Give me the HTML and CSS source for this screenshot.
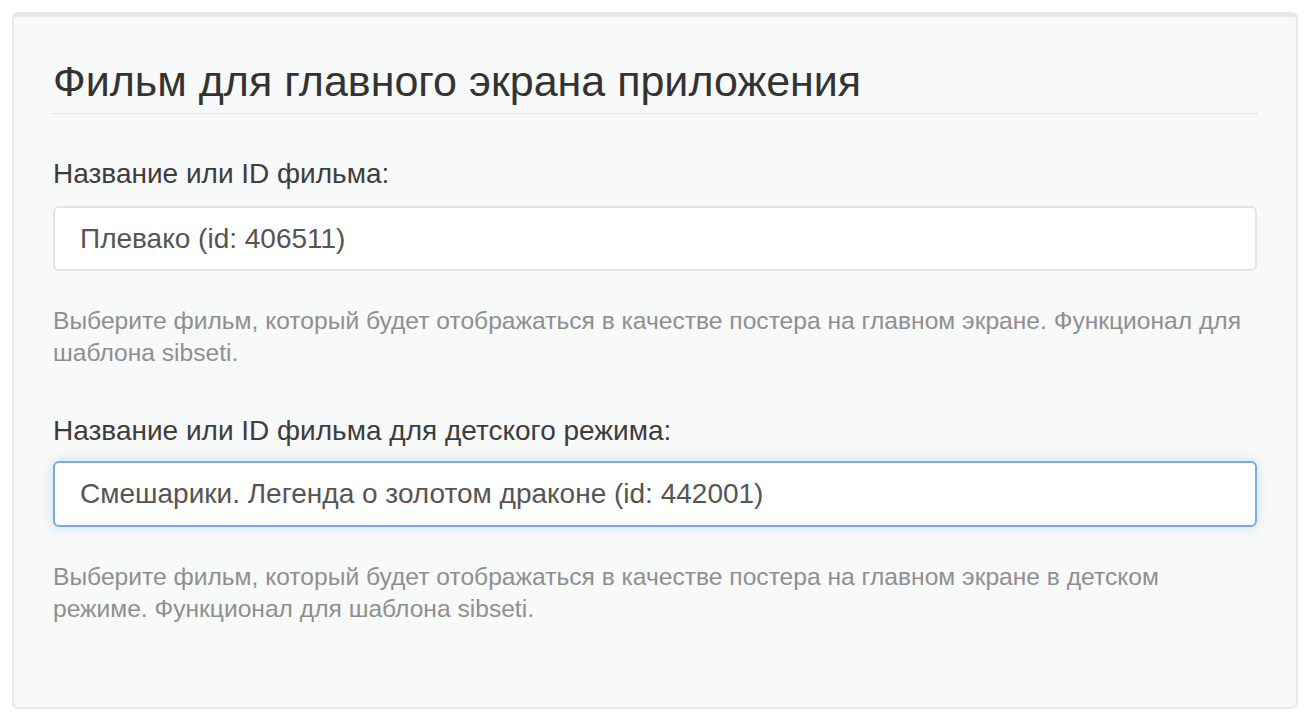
FILE: index.html
```html
<!DOCTYPE html>
<html lang="ru">
<head>
    <meta charset="UTF-8">
    <meta name="viewport" content="width=device-width, initial-scale=1.0">
    <title>Фильм для главного экрана</title>
    <link rel="stylesheet" href="styles.css">
</head>
<body>

<div class="panel">
    <!-- Header -->
    <h3 class="panel-title">Фильм для главного экрана приложения</h3>

    <!-- Main poster -->
    <div class="form-group">
        <label for="main-film">Название или ID фильма:</label>
        <input type="text" id="main-film" class="form-control" value="Плевако (id: 406511)">
        <p class="help-block">Выберите фильм, который будет отображаться в качестве постера на главном экране. Функционал для шаблона sibseti.</p>
    </div>

    <!-- Kids mode poster -->
    <div class="form-group">
        <label for="kids-film">Название или ID фильма для детского режима:</label>
        <input type="text" id="kids-film" class="form-control is-focused" value="Смешарики. Легенда о золотом драконе (id: 442001)">
        <p class="help-block">Выберите фильм, который будет отображаться в качестве постера на главном экране в детском режиме. Функционал для шаблона sibseti.</p>
    </div>
</div>

</body>
</html>
```

FILE: styles.css
```css
/* Global Reset */
*, *::before, *::after {
    margin: 0;
    padding: 0;
    box-sizing: border-box;
}

:root {
    --text-color: #333333;
    --muted-color: #8f8f8f;
    --border-color: #e6e8ea;
    --focus-color: #79abe6;
}

body {
    font-family: 'Liberation Sans', Arial, sans-serif;
    background-color: #ffffff;
    color: var(--text-color);
    padding: 12px;
}

/* Panel */
.panel {
    background-color: #f8f9f9;
    border: 2px solid var(--border-color);
    border-top-width: 5px;
    border-radius: 6px;
    padding: 41px 39px 82px;
}

.panel-title {
    font-size: 43px;
    font-weight: 400;
    line-height: 1.1;
    color: #333333;
    padding-bottom: 8px;
    border-bottom: 1px dotted #cdd0d2;
}

/* Form groups */
.form-group label {
    display: block;
    font-size: 28px;
    line-height: 35px;
    color: #3d3d3d;
    margin-top: 42px;
    margin-bottom: 15px;
}

.form-group + .form-group label {
    margin-top: 44px;
    margin-bottom: 13px;
}

.form-control {
    display: block;
    width: 100%;
    height: 65px;
    padding: 0 25px;
    font-family: inherit;
    font-size: 28px;
    color: #555555;
    background-color: #ffffff;
    border: 2px solid #e4e4e4;
    border-radius: 6px;
    outline: none;
}

.form-control.is-focused {
    height: 66px;
    border-color: var(--focus-color);
    box-shadow: 0 0 12px rgba(102, 175, 233, 0.35);
}

.help-block {
    font-size: 24.6px;
    line-height: 32px;
    color: var(--muted-color);
    margin-top: 34px;
}
```
